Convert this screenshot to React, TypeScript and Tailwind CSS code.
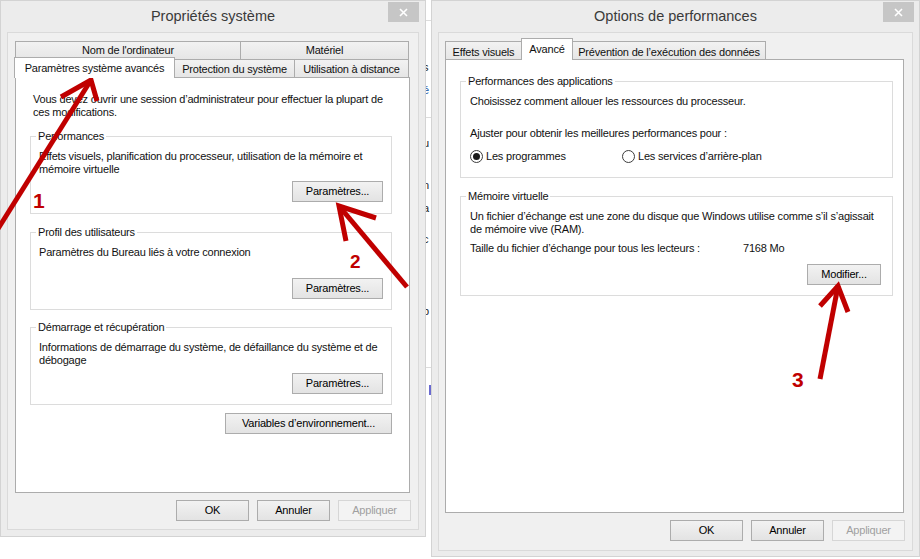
import type { ReactNode } from 'react';

const font = "font-['Liberation_Sans',Arial,sans-serif]";

function TitleBar({ title, closeClass }: { title: string; closeClass: string }) {
  return (
    <div className="relative flex h-[31px] shrink-0 items-center justify-center">
      <span className="text-[14.5px] tracking-normal text-[#3a3a3a]">{title}</span>
      <div className={`absolute top-[1px] flex h-[20px] w-[31px] items-center justify-center bg-[#c6c6c6] ${closeClass}`}>
        <svg width="9" height="9" viewBox="0 0 9 9">
          <path d="M1 1L8 8M8 1L1 8" stroke="#fff" strokeWidth="1.6" />
        </svg>
      </div>
    </div>
  );
}

function Button({
  children,
  className = '',
  disabled = false,
}: {
  children: ReactNode;
  className?: string;
  disabled?: boolean;
}) {
  return (
    <div
      className={`flex h-[21px] shrink-0 items-center justify-center border ${
        disabled
          ? 'border-[#d6d6d6] bg-[#f3f3f3] text-[#a0a0a0]'
          : 'border-[#acacac] bg-linear-to-b from-[#f2f2f2] to-[#e3e3e3] text-black'
      } ${className}`}
    >
      {children}
    </div>
  );
}

function Group({ legend, className, children }: { legend: string; className: string; children: ReactNode }) {
  return (
    <div className={`relative flex flex-col border border-[#dcdcdc] ${className}`}>
      <span className="absolute left-[5px] top-[-7px] bg-white px-[2px] leading-[13px]">{legend}</span>
      {children}
    </div>
  );
}

function Radio({ checked }: { checked?: boolean }) {
  return (
    <span className="flex h-[13px] w-[13px] shrink-0 items-center justify-center rounded-full border border-[#3c3c3c] bg-white">
      {checked && <span className="h-[7px] w-[7px] rounded-full bg-[#1a1a1a]" />}
    </span>
  );
}

function DialogButtons() {
  return (
    <div className="mt-[7px] flex justify-end gap-[8px]">
      <Button className="w-[73px]">OK</Button>
      <Button className="w-[73px]">Annuler</Button>
      <Button className="w-[73px]" disabled>
        Appliquer
      </Button>
    </div>
  );
}

function SystemProperties() {
  return (
    <div className="flex h-[537px] w-[426px] shrink-0 flex-col border border-[#d3d3d3] bg-[#ececec]">
      <TitleBar title="Propriétés système" closeClass="right-[6px]" />
      <div className="mx-[6px] flex h-[498px] flex-col border border-[#dadada] bg-[#f0f0f0] px-[7px] pt-[8px]">
        <div className="flex h-[18px]">
          <div className="flex w-[225px] items-center justify-center border-l border-t border-[#acacac] bg-linear-to-b from-[#f2f2f2] to-[#e6e6e6]">
            Nom de l'ordinateur
          </div>
          <div className="flex w-[169px] items-center justify-center border-x border-t border-[#acacac] bg-linear-to-b from-[#f2f2f2] to-[#e6e6e6]">
            Matériel
          </div>
        </div>
        <div className="flex h-[18px] items-start">
          <div className="relative z-10 -ml-px -mt-[2px] flex h-[21px] w-[161px] items-center justify-center border-x border-t border-[#acacac] bg-white">
            Paramètres système avancés
          </div>
          <div className="flex h-[18px] w-[120px] items-center justify-center border-r border-t border-[#acacac] bg-linear-to-b from-[#f2f2f2] to-[#e6e6e6] pt-[1px]">
            Protection du système
          </div>
          <div className="flex h-[18px] w-[114px] items-center justify-center border-r border-t border-[#acacac] bg-linear-to-b from-[#f2f2f2] to-[#e6e6e6] pt-[1px]">
            Utilisation à distance
          </div>
        </div>
        <div className="flex h-[416px] w-[395px] flex-col border border-[#acacac] bg-white pl-[14px] pt-[15px]">
          <p className="pl-[3px]">
            Vous devez ouvrir une session d’administrateur pour effectuer la plupart de
            <br />
            ces modifications.
          </p>
          <Group legend="Performances" className="mt-[17px] h-[78px] w-[362px] pl-[8px] pt-[13px]">
            <p>
              Effets visuels, planification du processeur, utilisation de la mémoire et
              <br />
              mémoire virtuelle
            </p>
            <Button className="mr-[8px] mt-[5px] w-[91px] self-end">Paramètres...</Button>
          </Group>
          <Group legend="Profil des utilisateurs" className="mt-[18px] h-[78px] w-[362px] pl-[8px] pt-[13px]">
            <p>Paramètres du Bureau liés à votre connexion</p>
            <Button className="mr-[8px] mt-[19px] w-[91px] self-end">Paramètres...</Button>
          </Group>
          <Group legend="Démarrage et récupération" className="mt-[17px] h-[78px] w-[362px] pl-[8px] pt-[13px]">
            <p>
              Informations de démarrage du système, de défaillance du système et de
              <br />
              débogage
            </p>
            <Button className="mr-[8px] mt-[6px] w-[91px] self-end">Paramètres...</Button>
          </Group>
          <div className="mt-[8px] flex w-[362px] justify-end">
            <Button className="w-[167px]">Variables d’environnement...</Button>
          </div>
        </div>
        <DialogButtons />
      </div>
    </div>
  );
}

function PerformanceOptions() {
  return (
    <div className="flex h-[557px] w-[489px] shrink-0 flex-col border border-[#d3d3d3] bg-[#ececec]">
      <TitleBar title="Options de performances" closeClass="right-[5px]" />
      <div className="mx-[6px] flex h-[519px] flex-col border border-[#dadada] bg-[#f0f0f0] pl-[6px] pr-[7px] pt-[8px]">
        <div className="flex h-[18px] items-start">
          <div className="flex h-[18px] w-[76px] items-center justify-center border-l border-t border-[#acacac] bg-linear-to-b from-[#f2f2f2] to-[#e6e6e6] pt-[3px]">
            Effets visuels
          </div>
          <div className="relative z-10 -mt-[3px] flex h-[22px] w-[52px] items-start justify-center border-x border-t border-[#acacac] bg-white pt-[4px]">
            Avancé
          </div>
          <div className="flex h-[18px] w-[193px] items-center justify-center border-r border-t border-[#acacac] bg-linear-to-b from-[#f2f2f2] to-[#e6e6e6] pt-[3px]">
            Prévention de l’exécution des données
          </div>
        </div>
        <div className="flex h-[454px] w-[459px] flex-col border border-[#acacac] bg-white pl-[14px] pt-[21px]">
          <Group legend="Performances des applications" className="h-[97px] w-[433px] pl-[9px] pt-[13px]">
            <p>Choisissez comment allouer les ressources du processeur.</p>
            <p className="mt-[19px]">Ajuster pour obtenir les meilleures performances pour :</p>
            <div className="mt-[9px] flex h-[14px] items-center">
              <div className="flex w-[152px] items-center gap-[3px]">
                <Radio checked />
                <span>Les programmes</span>
              </div>
              <div className="flex items-center gap-[3px]">
                <Radio />
                <span>Les services d’arrière-plan</span>
              </div>
            </div>
          </Group>
          <Group legend="Mémoire virtuelle" className="mt-[18px] h-[100px] w-[433px] pl-[9px] pt-[13px]">
            <p>
              Un fichier d’échange est une zone du disque que Windows utilise comme s’il s’agissait
              <br />
              de mémoire vive (RAM).
            </p>
            <div className="mt-[6px] flex">
              <span className="w-[273px]">Taille du fichier d’échange pour tous les lecteurs :</span>
              <span>7168 Mo</span>
            </div>
            <Button className="mr-[11px] mt-[9px] w-[74px] self-end">Modifier...</Button>
          </Group>
        </div>
        <DialogButtons />
      </div>
    </div>
  );
}

function BehindStrip() {
  return (
    <div className="flex h-[559px] w-[5px] shrink-0 flex-col overflow-hidden text-[#222]">
      <div className="mt-[20px] h-px w-full bg-[#dcdcdc]" />
      <span className="-ml-[3px] mt-[40px]">s</span>
      <span className="-ml-[3px] mt-[10px] text-[#1e5aa8]">é</span>
      <div className="mt-[20px] h-px w-full bg-[#dcdcdc]" />
      <span className="-ml-[3px] mt-[19px]">u</span>
      <span className="-ml-[3px] mt-[29px]">n</span>
      <span className="-ml-[3px] mt-[10px]">a</span>
      <span className="-ml-[3px] mt-[18px]">c</span>
      <span className="-ml-[3px] mt-[59px]">p</span>
      <div className="mt-[49px] h-px w-full bg-[#dcdcdc]" />
      <div className="mt-[17px] h-[10px] w-[2px] self-end bg-[#6a6ad0]" />
    </div>
  );
}

export default function App() {
  return (
    <div className={`relative flex h-[559px] w-[920px] items-start overflow-hidden bg-white text-[11px] leading-[13px] tracking-[-0.2px] text-[#111] ${font}`}>
      <SystemProperties />
      <BehindStrip />
      <PerformanceOptions />

      <svg className="pointer-events-none absolute left-0 top-0" width="920" height="559" viewBox="0 0 920 559">
        <g stroke="#c00000" strokeWidth="5" fill="none">
          <path d="M-4 232L91 80" />
          <path d="M61 97L91 80L97 101" />
          <path d="M407 287L339 206" />
          <path d="M376 218L339 206L346 241" />
          <path d="M820 379L838 286" />
          <path d="M820 306L838 286L848 312" />
        </g>
      </svg>
      <span className="absolute left-[33px] top-[190px] text-[21px] font-bold leading-none tracking-normal text-[#c00000]">1</span>
      <span className="absolute left-[350px] top-[252px] text-[19px] font-bold leading-none tracking-normal text-[#c00000]">2</span>
      <span className="absolute left-[792px] top-[369px] text-[21px] font-bold leading-none tracking-normal text-[#c00000]">3</span>
    </div>
  );
}
